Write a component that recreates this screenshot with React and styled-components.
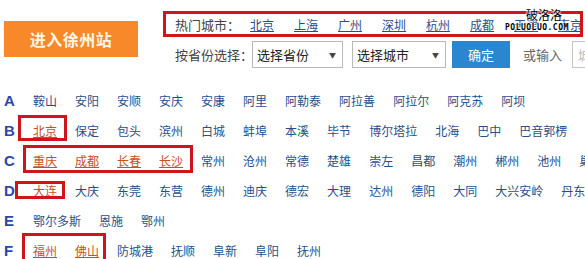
import React from "react";
import styled, { createGlobalStyle } from "styled-components";

const Global = createGlobalStyle`
  html, body { margin: 0; padding: 0; background: #fff; }
  body {
    font-family: "Noto Sans CJK SC", "Liberation Sans", sans-serif;
    font-size: 12px;
    color: #333;
    overflow: hidden;
  }
`;

const Page = styled.div`
  position: relative;
  width: 585px;
  height: 259px;
  overflow: hidden;
`;

const Header = styled.div`
  display: flex;
  align-items: flex-start;
  padding-top: 11px;
`;

const EnterButton = styled.div`
  flex: none;
  margin: 10px 0 0 4px;
  width: 134px;
  height: 36px;
  background: #f7892a;
  color: #fff7e6;
  font-size: 16px;
  font-weight: 700;
  letter-spacing: 0.5px;
  white-space: nowrap;
  display: flex;
  align-items: center;
  justify-content: center;
`;

const Controls = styled.div`
  flex: none;
  margin-left: 25px;
  display: flex;
  flex-direction: column;
  gap: 4px;
`;

const HotRow = styled.div`
  height: 26px;
  display: flex;
  align-items: center;
  padding-left: 12px;
  white-space: nowrap;
`;

const Label = styled.span`
  font-size: 13px;
  color: #444;
  width: ${(p) => p.$w}px;
  flex: none;
`;

const HotLink = styled.a`
  color: #1f4f8c;
  text-decoration: underline;
  font-size: 12px;
  margin-right: 20px;
  flex: none;
`;

const SelectRow = styled.div`
  height: 27px;
  display: flex;
  align-items: center;
  padding-left: 12px;
  white-space: nowrap;
`;

const FakeSelect = styled.div`
  box-sizing: border-box;
  width: ${(p) => p.$w}px;
  height: 27px;
  margin-right: ${(p) => p.$mr}px;
  border: 1px solid #b9b9b9;
  background: #fff;
  display: flex;
  align-items: center;
  justify-content: space-between;
  padding: 0 6px 0 4px;
  font-size: 13px;
  color: #222;
  flex: none;
`;

const Arrow = styled.span`
  font-size: 7px;
  color: #444;
`;

const ConfirmButton = styled.div`
  width: 58px;
  height: 27px;
  background: #2a86cf;
  color: #fff;
  font-size: 13px;
  display: flex;
  align-items: center;
  justify-content: center;
  flex: none;
  margin-right: 13px;
`;

const OrText = styled.span`
  font-size: 13px;
  color: #666;
  margin-right: 10px;
  flex: none;
`;

const Input = styled.div`
  box-sizing: border-box;
  width: 80px;
  height: 27px;
  border: 1px solid #c4c4c4;
  padding-left: 5px;
  font-size: 13px;
  color: #bbb;
  display: flex;
  align-items: center;
  flex: none;
`;

const List = styled.div`
  margin-top: 17px;
  display: flex;
  flex-direction: column;
`;

const LetterRow = styled.div`
  height: 30px;
  display: flex;
  align-items: center;
  white-space: nowrap;
`;

const Letter = styled.span`
  width: 20px;
  padding-left: 4px;
  flex: none;
  font-family: "Liberation Sans", Arial, sans-serif;
  font-weight: 700;
  font-size: 15px;
  color: #2a48a8;
`;

const City = styled.a`
  flex: none;
  padding: 0 9px;
  font-size: 12px;
  color: ${(p) => (p.$hot ? "#c8501e" : "#1f4f8c")};
  text-decoration: ${(p) => (p.$hot ? "underline" : "none")};
`;

const Mark = styled.div`
  position: absolute;
  box-sizing: border-box;
  border: 3px solid #d0141c;
  pointer-events: none;
`;

const Watermark = styled.div`
  position: absolute;
  left: 505px;
  top: 9px;
  display: flex;
  flex-direction: column;
  align-items: center;
  line-height: 1;
  color: #000;
  text-shadow: 0 0 2px #fff, 0 0 2px #fff, 0 0 2px #fff;
`;

const WmTitle = styled.span`
  font-size: 12px;
  margin-left: 14px;
`;

const WmDomain = styled.span`
  font-family: "DejaVu Sans Mono", monospace;
  font-size: 8px;
  font-weight: 700;
  letter-spacing: 0.5px;
  margin-top: 3px;
`;

const hotCities = ["北京", "上海", "广州", "深圳", "杭州", "成都", "天津", "南京"];

const rows = [
  { l: "A", c: ["鞍山", "安阳", "安顺", "安庆", "安康", "阿里", "阿勒泰", "阿拉善", "阿拉尔", "阿克苏", "阿坝"] },
  { l: "B", c: ["北京", "保定", "包头", "滨州", "白城", "蚌埠", "本溪", "毕节", "博尔塔拉", "北海", "巴中", "巴音郭楞"], hot: 1 },
  { l: "C", c: ["重庆", "成都", "长春", "长沙", "常州", "沧州", "常德", "楚雄", "崇左", "昌都", "潮州", "郴州", "池州", "巢湖"], hot: 4 },
  { l: "D", c: ["大连", "大庆", "东莞", "东营", "德州", "迪庆", "德宏", "大理", "达州", "德阳", "大同", "大兴安岭", "丹东"], hot: 1 },
  { l: "E", c: ["鄂尔多斯", "恩施", "鄂州"], hot: 0 },
  { l: "F", c: ["福州", "佛山", "防城港", "抚顺", "阜新", "阜阳", "抚州"], hot: 2 },
];

const marks = [
  { x: 163, y: 11, w: 420, h: 26 },
  { x: 18, y: 115, w: 49, h: 26 },
  { x: 23, y: 145, w: 170, h: 28 },
  { x: 15, y: 181, w: 50, h: 18 },
  { x: 22, y: 233, w: 84, h: 30 },
];

export default function App() {
  return (
    <Page>
      <Global />
      <Header>
        <EnterButton>进入徐州站</EnterButton>
        <Controls>
          <HotRow>
            <Label $w={75}>热门城市：</Label>
            {hotCities.map((c) => (
              <HotLink key={c}>{c}</HotLink>
            ))}
          </HotRow>
          <SelectRow>
            <Label $w={77}>按省份选择：</Label>
            <FakeSelect $w={91} $mr={9}>
              选择省份<Arrow>▼</Arrow>
            </FakeSelect>
            <FakeSelect $w={94} $mr={6}>
              选择城市<Arrow>▼</Arrow>
            </FakeSelect>
            <ConfirmButton>确定</ConfirmButton>
            <OrText>或输入</OrText>
            <Input>城市</Input>
          </SelectRow>
        </Controls>
      </Header>
      <List>
        {rows.map((r) => (
          <LetterRow key={r.l}>
            <Letter>{r.l}</Letter>
            {r.c.map((c, i) => (
              <City key={c} $hot={i < (r.hot || 0)}>
                {c}
              </City>
            ))}
          </LetterRow>
        ))}
      </List>
      {marks.map((m, i) => (
        <Mark key={i} style={{ left: m.x, top: m.y, width: m.w, height: m.h }} />
      ))}
      <Watermark>
        <WmTitle>破洛洛</WmTitle>
        <WmDomain>POLUOLUO.COM</WmDomain>
      </Watermark>
    </Page>
  );
}
